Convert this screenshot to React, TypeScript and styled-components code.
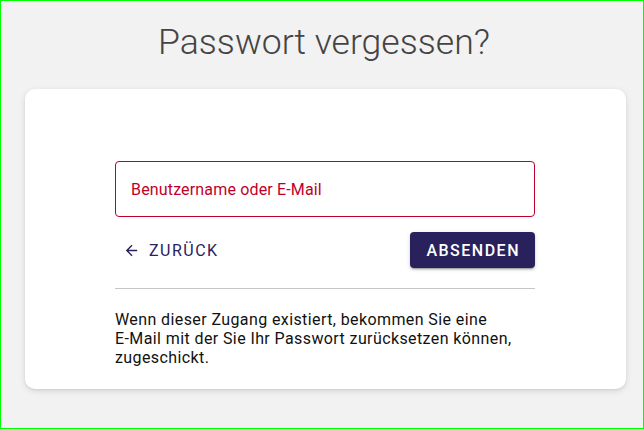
import React from "react";
import styled, { createGlobalStyle } from "styled-components";

const Global = createGlobalStyle`
  html, body { margin: 0; padding: 0; }
  body { background: #f2f2f2; font-family: Roboto, "Liberation Sans", Arial, sans-serif; }
  * { box-sizing: border-box; }
`;

const Page = styled.div`
  min-height: 100vh;
  border: 1px solid #00ff00;
  background: #f2f2f2;
  padding: 0 17px 0 24px;
  display: flex;
  flex-direction: column;
`;

const Title = styled.h1`
  margin: 20px 0 0;
  font-family: Roboto, "Liberation Sans", sans-serif;
  font-weight: 300;
  font-size: 35.6px;
  line-height: 43px;
  color: #444444;
  text-align: center;
  padding-right: 3px;
`;

const Card = styled.div`
  margin-top: 25px;
  background: #ffffff;
  border-radius: 10px;
  box-shadow: 0 2px 6px rgba(0, 0, 0, 0.12), 0 1px 2px rgba(0, 0, 0, 0.06);
  padding: 72px 0 22px 90px;
  display: flex;
`;

const Column = styled.div`
  width: 420px;
  display: flex;
  flex-direction: column;
`;

const Field = styled.div`
  height: 56px;
  border: 1px solid #c0002a;
  border-radius: 4px;
  display: flex;
  align-items: center;
  padding: 0 15px;
  font-size: 16px;
  color: #c0002a;
  letter-spacing: 0.01em;
`;

const Actions = styled.div`
  margin-top: 15px;
  display: flex;
  justify-content: space-between;
  align-items: center;
  height: 36px;
`;

const TextButton = styled.button`
  border: none;
  background: transparent;
  display: flex;
  align-items: center;
  padding: 0 8px;
  height: 36px;
  font-family: Roboto, "Liberation Sans", sans-serif;
  font-weight: 400;
  font-size: 16px;
  letter-spacing: 1.5px;
  text-transform: uppercase;
  color: #28225e;
  cursor: pointer;
  svg { margin-right: 9px; }
`;

const PrimaryButton = styled.button`
  border: none;
  border-radius: 4px;
  background: #28215c;
  color: #ffffff;
  height: 36px;
  padding: 0 15px 0 16px;
  font-family: Roboto, "Liberation Sans", sans-serif;
  font-weight: 500;
  font-size: 16px;
  letter-spacing: 1.5px;
  text-transform: uppercase;
  box-shadow: 0 3px 1px -2px rgba(0, 0, 0, 0.2), 0 2px 2px 0 rgba(0, 0, 0, 0.14), 0 1px 5px 0 rgba(0, 0, 0, 0.12);
  cursor: pointer;
`;

const Divider = styled.hr`
  margin: 20px 0 0;
  border: none;
  border-top: 1px solid #c6c6c6;
  height: 0;
`;

const Note = styled.p`
  margin: 21px 0 0;
  font-size: 16px;
  letter-spacing: 0.4px;
  line-height: 19px;
  color: #111111;
`;

const ArrowBack = () => (
  <svg width="17" height="17" viewBox="0 0 24 24" fill="currentColor" aria-hidden>
    <path d="M20 11H7.83l5.59-5.59L12 4l-8 8 8 8 1.41-1.41L7.83 13H20v-2z" />
  </svg>
);

export default function App() {
  return (
    <>
      <Global />
      <Page>
        <Title>Passwort vergessen?</Title>
        <Card>
          <Column>
            <Field>Benutzername oder E-Mail</Field>
            <Actions>
              <TextButton>
                <ArrowBack />
                Zurück
              </TextButton>
              <PrimaryButton>Absenden</PrimaryButton>
            </Actions>
            <Divider />
            <Note>
              Wenn dieser Zugang existiert, bekommen Sie eine
              <br />
              E-Mail mit der Sie Ihr Passwort zurücksetzen können,
              <br />
              zugeschickt.
            </Note>
          </Column>
        </Card>
      </Page>
    </>
  );
}
